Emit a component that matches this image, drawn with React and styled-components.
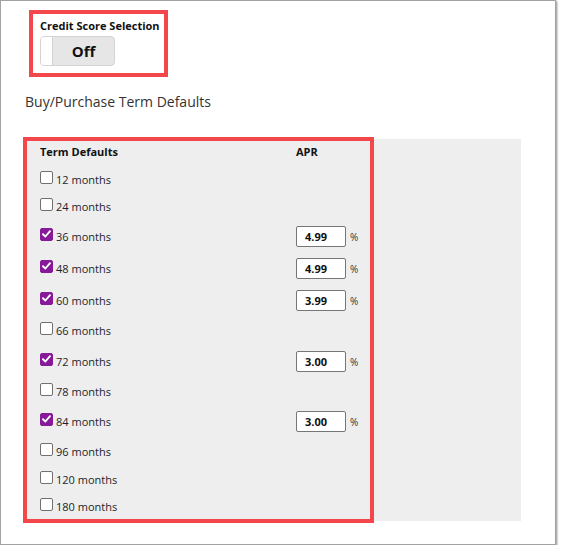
import styled, { createGlobalStyle } from "styled-components";

const GlobalStyle = createGlobalStyle`
  body {
    margin: 0;
    background: #ffffff;
    font-family: "Open Sans", "Liberation Sans", sans-serif;
    color: #222;
  }
`;

const terms = [
  { months: 12, pitch: 27 },
  { months: 24, pitch: 30 },
  { months: 36, pitch: 32, apr: "4.99" },
  { months: 48, pitch: 32, apr: "4.99" },
  { months: 60, pitch: 30, apr: "3.99" },
  { months: 66, pitch: 31 },
  { months: 72, pitch: 30, apr: "3.00" },
  { months: 78, pitch: 30 },
  { months: 84, pitch: 30, apr: "3.00" },
  { months: 96, pitch: 28 },
  { months: 120, pitch: 27 },
  { months: 180, pitch: 21 },
];

const Frame = styled.div`
  box-sizing: border-box;
  width: 556px;
  height: 545px;
  border: 1px solid #a3a3a3;
  box-shadow: 1px 1px 2px rgba(0, 0, 0, 0.45);
  background: #fff;
  overflow: hidden;
`;

const Highlight = styled.div`
  box-sizing: border-box;
  border: 4px solid #f4474c;
`;

const CreditBox = styled(Highlight)`
  width: 139px;
  height: 67px;
  margin: 9px 0 0 28px;
  padding: 5px 0 0 7px;
`;

const SmallLabel = styled.div`
  font-size: 11px;
  line-height: 14px;
  font-weight: 700;
  color: #111;
  white-space: nowrap;
`;

const Toggle = styled.div`
  box-sizing: border-box;
  width: 75px;
  height: 30px;
  margin-top: 3px;
  display: flex;
  background: #e6e6e6;
  border: 1px solid #d4d4d4;
  border-radius: 4px;
  overflow: hidden;
`;

const Knob = styled.div`
  width: 11px;
  background: #fff;
  border-right: 1px solid #d4d4d4;
`;

const ToggleText = styled.div`
  flex: 1;
  display: flex;
  align-items: center;
  justify-content: center;
  font-size: 15px;
  font-weight: 700;
  color: #111;
`;

const SectionTitle = styled.div`
  margin: 15px 0 0 24px;
  font-size: 14px;
  line-height: 20px;
  color: #333;
`;

const Panel = styled.div`
  position: relative;
  width: 496px;
  height: 382px;
  margin: 27px 0 0 24px;
  padding: 0 0 0 15px;
  box-sizing: border-box;
  background: #eeeeee;
`;

const PanelMark = styled(Highlight)`
  position: absolute;
  left: -2px;
  top: -2px;
  width: 351px;
  height: 386px;
  pointer-events: none;
`;

const HeaderRow = styled.div`
  display: grid;
  grid-template-columns: 256px 80px;
  height: 30px;
  padding-top: 6px;
  box-sizing: border-box;
`;

const Row = styled.div`
  display: grid;
  grid-template-columns: 256px 80px;
  align-items: center;
  height: ${(p) => p.$pitch}px;
  align-content: start;
`;

const Term = styled.label`
  display: flex;
  align-items: center;
  height: 21px;
  font-size: 11px;
  color: #1e1e2a;
`;

const Box = styled.span`
  box-sizing: border-box;
  width: 13px;
  height: 13px;
  margin: 0 3px 5px 0;
  border-radius: 2px;
  border: 1px solid ${(p) => (p.$checked ? "#861a98" : "#707070")};
  background: ${(p) => (p.$checked ? "#861a98" : "#fff")};
  display: flex;
  align-items: center;
  justify-content: center;
`;

const Apr = styled.div`
  display: flex;
  align-items: center;
  height: 21px;
`;

const AprInput = styled.div`
  box-sizing: border-box;
  width: 50px;
  height: 21px;
  padding-left: 8px;
  display: flex;
  align-items: center;
  background: #fff;
  border: 1px solid #767676;
  border-radius: 2px;
  font-size: 11px;
  font-weight: 700;
  color: #111;
`;

const Percent = styled.span`
  margin-left: 4px;
  font-size: 10px;
  color: #333;
`;

const Check = () => (
  <svg width="9" height="8" viewBox="0 0 9 8">
    <path d="M1 4.2 L3.4 6.5 L8 1.2" fill="none" stroke="#fff" strokeWidth="1.9" strokeLinecap="round" strokeLinejoin="round" />
  </svg>
);

export default function App() {
  return (
    <>
      <GlobalStyle />
      <Frame>
        <CreditBox>
          <SmallLabel>Credit Score Selection</SmallLabel>
          <Toggle>
            <Knob />
            <ToggleText>Off</ToggleText>
          </Toggle>
        </CreditBox>
        <SectionTitle>Buy/Purchase Term Defaults</SectionTitle>
        <Panel>
          <HeaderRow>
            <SmallLabel>Term Defaults</SmallLabel>
            <SmallLabel>APR</SmallLabel>
          </HeaderRow>
          {terms.map((t) => (
            <Row key={t.months} $pitch={t.pitch}>
              <Term>
                <Box $checked={!!t.apr}>{t.apr && <Check />}</Box>
                {t.months} months
              </Term>
              {t.apr ? (
                <Apr>
                  <AprInput>{t.apr}</AprInput>
                  <Percent>%</Percent>
                </Apr>
              ) : (
                <div />
              )}
            </Row>
          ))}
          <PanelMark />
        </Panel>
      </Frame>
    </>
  );
}
